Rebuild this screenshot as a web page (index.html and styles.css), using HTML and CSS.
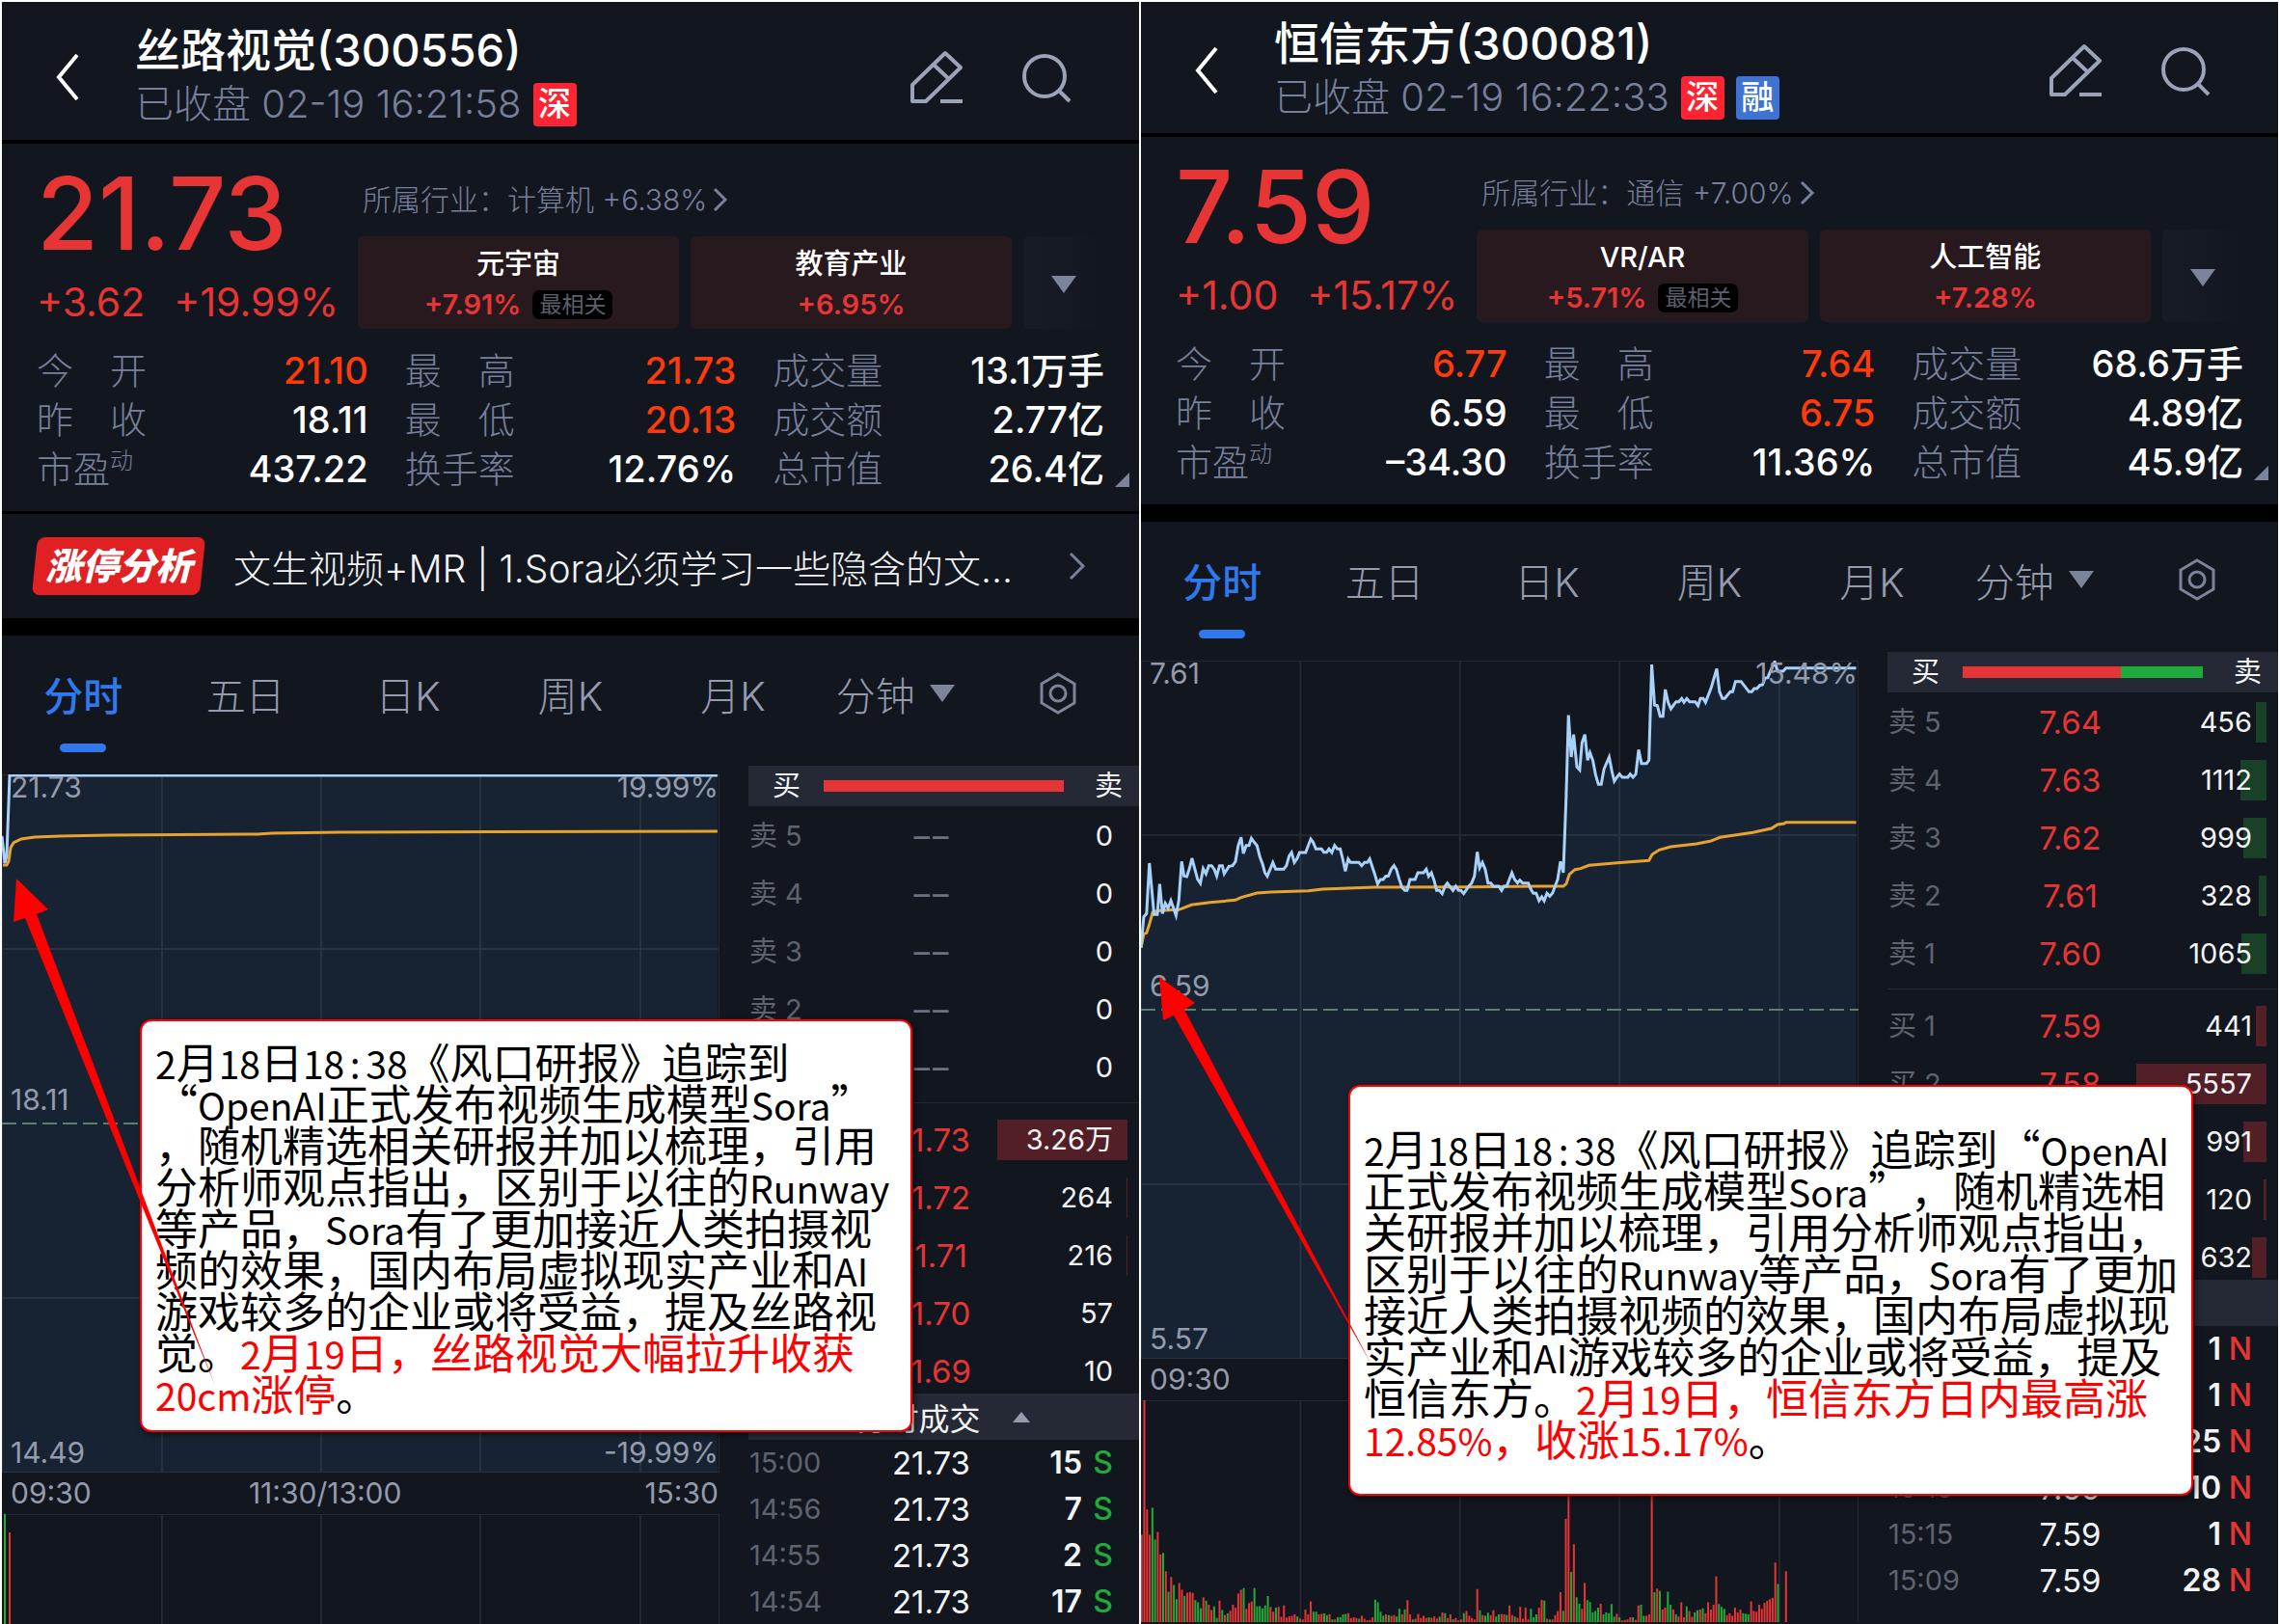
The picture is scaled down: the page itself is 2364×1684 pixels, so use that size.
FILE: index.html
```html
<!DOCTYPE html>
<html lang="zh-CN">
<head>
    <meta charset="UTF-8">
    <meta name="viewport" content="width=device-width, initial-scale=1.0">
    <title>丝路视觉 / 恒信东方</title>
    <link rel="stylesheet" href="styles.css">
</head>
<body>
    <main class="board">
        <section class="panel">
            <header class="header">
                <button class="icon-button" aria-label="返回">
                    <svg width="26" height="52" viewBox="0 0 26 52"><path class="back" d="M23 3 L4 26 L23 49"/></svg>
                </button>
                <div class="title">
                    <h1>丝路视觉(300556)</h1>
                    <p>已收盘 02-19 16:21:58 <span class="tag tag-red">深</span></p>
                </div>
                <button class="icon-button" aria-label="编辑">
                    <svg class="icon" width="56" height="56" viewBox="0 0 56 56"><path d="M38 3 L54 18 L18 53 H4 V36 Z M26 15 L42 30 M33 53 H56"/></svg>
                </button>
                <button class="icon-button" aria-label="搜索">
                    <svg class="icon" width="54" height="56" viewBox="0 0 54 56"><circle cx="24" cy="27" r="21"/><path d="M39 42 L50 53"/></svg>
                </button>
            </header>

            <div class="quote">
                <div class="summary">
                    <div class="price">
                        <strong>21.73</strong>
                        <p><span>+3.62</span><span>+19.99%</span></p>
                    </div>
                    <div class="concepts">
                        <a class="industry" href="#">所属行业：计算机 +6.38%<svg width="16" height="26" viewBox="0 0 16 26"><path d="M2 2 L13 13 L2 24"/></svg></a>
                        <div class="concept-list">
                            <a class="concept" href="#"><b>元宇宙</b><span>+7.91% <i>最相关</i></span></a>
                            <a class="concept" href="#"><b>教育产业</b><span>+6.95%</span></a>
                            <button class="more" aria-label="更多"><span class="down"></span></button>
                        </div>
                    </div>
                </div>
                <dl class="stats">
                    <div><dt>今<span></span>开</dt><dd class="up">21.10</dd></div>
                    <div><dt>最<span></span>高</dt><dd class="up">21.73</dd></div>
                    <div><dt>成交量</dt><dd>13.1万手</dd></div>
                    <div><dt>昨<span></span>收</dt><dd>18.11</dd></div>
                    <div><dt>最<span></span>低</dt><dd class="up">20.13</dd></div>
                    <div><dt>成交额</dt><dd>2.77亿</dd></div>
                    <div><dt>市盈<sup>动</sup></dt><dd>437.22</dd></div>
                    <div><dt>换手率</dt><dd>12.76%</dd></div>
                    <div><dt>总市值</dt><dd>26.4亿</dd></div>
                </dl>
            </div>

            <a class="analysis" href="#">
                <span class="analysis-tag">涨停分析</span>
                <span class="analysis-text">文生视频+MR | 1.Sora必须学习一些隐含的文…</span>
                <svg width="20" height="32" viewBox="0 0 20 32"><path d="M3 3 L16 16 L3 29"/></svg>
            </a>

            <nav class="tabs">
                <button class="active">分时</button>
                <button>五日</button>
                <button>日K</button>
                <button>周K</button>
                <button>月K</button>
                <button>分钟<span class="down"></span></button>
                <button aria-label="设置"><svg width="40" height="44" viewBox="0 0 40 44"><path d="M20 2 L37 12 V32 L20 42 L3 32 V12 Z"/><circle cx="20" cy="22" r="8"/></svg></button>
            </nav>

            <div class="market">
                <div class="chart">
                    <div class="plot">
                        <svg viewBox="0 0 744 724" preserveAspectRatio="none">
                            <path class="area" d="M0 64 L3 92 L5 84 L8 1 H742 V724 H0 Z"/>
                            <path class="grid" d="M0 0 H744 V724 H0 Z M166 0 V724 M331 0 V724 M496 0 V724 M662 0 V724 M0 181 H744 M0 543 H744"/>
                            <path class="base" d="M0 362 H744"/>
                            <path class="avg" d="M1 94 L5 94 L7 90 L9 76 L12 71 L20 67 L34 65 L60 64 L111 63 L265 62 L280 61 L350 60 L742 59"/>
                            <path class="line" d="M0 64 L3 92 L5 84 L8 1 H742"/>
                        </svg>
                        <span class="mark top-left">21.73</span>
                        <span class="mark top-right">19.99%</span>
                        <span class="mark mid-left">18.11</span>
                        <span class="mark bottom-left">14.49</span>
                        <span class="mark bottom-right">-19.99%</span>
                    </div>
                    <div class="times"><span>09:30</span><span>11:30/13:00</span><span>15:30</span></div>
                    <svg class="volume" viewBox="0 0 744 230" preserveAspectRatio="none">
                        <path class="grid" d="M0 0 H744 V230 M166 0 V230 M331 0 V230 M496 0 V230 M662 0 V230"/>
                        <path class="vol-down" d="M3 230 V0"/>
                        <path class="vol-up" d="M8 230 V19"/>
                    </svg>
                </div>

                <div class="book">
                    <div class="ratio"><span>买</span><div class="ratio-bar"></div><span>卖</span></div>
                    <table class="orders">
                        <tbody>
                            <tr><th>卖 5</th><td class="none">–&hairsp;–</td><td>0</td></tr>
                            <tr><th>卖 4</th><td class="none">–&hairsp;–</td><td>0</td></tr>
                            <tr><th>卖 3</th><td class="none">–&hairsp;–</td><td>0</td></tr>
                            <tr><th>卖 2</th><td class="none">–&hairsp;–</td><td>0</td></tr>
                            <tr><th>卖 1</th><td class="none">–&hairsp;–</td><td>0</td></tr>
                        </tbody>
                        <tbody class="buy">
                            <tr><th>买 1</th><td>21.73</td><td>3.26万<i style="width: 135px"></i></td></tr>
                            <tr><th>买 2</th><td>21.72</td><td>264<i style="width: 1px"></i></td></tr>
                            <tr><th>买 3</th><td>21.71</td><td>216<i style="width: 1px"></i></td></tr>
                            <tr><th>买 4</th><td>21.70</td><td>57</td></tr>
                            <tr><th>买 5</th><td>21.69</td><td>10</td></tr>
                        </tbody>
                    </table>
                    <button class="trades-head">分时成交<span class="upward"></span></button>
                    <table class="trades">
                        <tbody>
                            <tr><th>15:00</th><td>21.73</td><td>15<b class="sell-side">S</b></td></tr>
                            <tr><th>14:56</th><td>21.73</td><td>7<b class="sell-side">S</b></td></tr>
                            <tr><th>14:55</th><td>21.73</td><td>2<b class="sell-side">S</b></td></tr>
                            <tr><th>14:54</th><td>21.73</td><td>17<b class="sell-side">S</b></td></tr>
                        </tbody>
                    </table>
                </div>
            </div>

            <div class="note note-left">
                <p><span class="en">2</span>月<span class="en">18</span>日<span class="en">18<s>:</s>38</span>《风口研报》追踪到<br>“<span class="en">OpenAI</span>正式发布视频生成模型<span class="en">Sora</span>”<br>，随机精选相关研报并加以梳理，引用<br>分析师观点指出，区别于以往的<span class="en">Runway</span><br>等产品，<span class="en">Sora</span>有了更加接近人类拍摄视<br>频的效果，国内布局虚拟现实产业和<span class="en">AI</span><br>游戏较多的企业或将受益，提及丝路视<br>觉。<em><span class="en">2</span>月<span class="en">19</span>日，丝路视觉大幅拉升收获<br><span class="en">20cm</span>涨停</em>。</p>
            </div>
            <svg class="arrow arrow-left" width="220" height="540" viewBox="0 0 220 540"><path d="M5 8 L38 40 L26 45 L211 534 L14 49 L2 53 Z"/></svg>
        </section>

        <section class="panel compact">
            <header class="header">
                <button class="icon-button" aria-label="返回">
                    <svg width="26" height="52" viewBox="0 0 26 52"><path class="back" d="M23 3 L4 26 L23 49"/></svg>
                </button>
                <div class="title">
                    <h1>恒信东方(300081)</h1>
                    <p>已收盘 02-19 16:22:33 <span class="tag tag-red">深</span><span class="tag tag-blue">融</span></p>
                </div>
                <button class="icon-button" aria-label="编辑">
                    <svg class="icon" width="56" height="56" viewBox="0 0 56 56"><path d="M38 3 L54 18 L18 53 H4 V36 Z M26 15 L42 30 M33 53 H56"/></svg>
                </button>
                <button class="icon-button" aria-label="搜索">
                    <svg class="icon" width="54" height="56" viewBox="0 0 54 56"><circle cx="24" cy="27" r="21"/><path d="M39 42 L50 53"/></svg>
                </button>
            </header>

            <div class="quote">
                <div class="summary">
                    <div class="price">
                        <strong>7.59</strong>
                        <p><span>+1.00</span><span>+15.17%</span></p>
                    </div>
                    <div class="concepts">
                        <a class="industry" href="#">所属行业：通信 +7.00%<svg width="16" height="26" viewBox="0 0 16 26"><path d="M2 2 L13 13 L2 24"/></svg></a>
                        <div class="concept-list">
                            <a class="concept" href="#"><b>VR/AR</b><span>+5.71% <i>最相关</i></span></a>
                            <a class="concept" href="#"><b>人工智能</b><span>+7.28%</span></a>
                            <button class="more" aria-label="更多"><span class="down"></span></button>
                        </div>
                    </div>
                </div>
                <dl class="stats">
                    <div><dt>今<span></span>开</dt><dd class="up">6.77</dd></div>
                    <div><dt>最<span></span>高</dt><dd class="up">7.64</dd></div>
                    <div><dt>成交量</dt><dd>68.6万手</dd></div>
                    <div><dt>昨<span></span>收</dt><dd>6.59</dd></div>
                    <div><dt>最<span></span>低</dt><dd class="up">6.75</dd></div>
                    <div><dt>成交额</dt><dd>4.89亿</dd></div>
                    <div><dt>市盈<sup>动</sup></dt><dd>–34.30</dd></div>
                    <div><dt>换手率</dt><dd>11.36%</dd></div>
                    <div><dt>总市值</dt><dd>45.9亿</dd></div>
                </dl>
            </div>

            <nav class="tabs">
                <button class="active">分时</button>
                <button>五日</button>
                <button>日K</button>
                <button>周K</button>
                <button>月K</button>
                <button>分钟<span class="down"></span></button>
                <button aria-label="设置"><svg width="40" height="44" viewBox="0 0 40 44"><path d="M20 2 L37 12 V32 L20 42 L3 32 V12 Z"/><circle cx="20" cy="22" r="8"/></svg></button>
            </nav>

            <div class="market">
                <div class="chart">
                    <div class="plot">
                        <svg id="priceChart" viewBox="2 75 1534 2172" preserveAspectRatio="none">
                            <path class="area" id="priceArea"/>
                            <path class="grid" d="M2 75 H1536 V2247 H2 Z M343 75 V2247 M684 75 V2247 M1025 75 V2247 M1367 75 V2247 M2 618 H1536 M2 1704 H1536"/>
                            <path class="base" d="M2 1161 H1536"/>
                            <polyline class="avg" points="2,968 8,925 14,922 20,895 27,858 40,853 83,850 110,835 150,827 204,820 216,812 250,798 280,795 360,791 390,786 500,780 700,779 850,777 905,777 911,770 918,740 930,725 942,722 960,712 1020,704 1088,697 1095,678 1110,664 1135,654 1190,645 1221,636 1240,625 1310,610 1350,597 1363,585 1377,582 1381,578 1531,578"/>
                            <polyline class="line" id="priceLine"/>
                        </svg>
                        <span class="mark top-left">7.61</span>
                        <span class="mark top-right">15.48%</span>
                        <span class="mark mid-left">6.59</span>
                        <span class="mark bottom-left">5.57</span>
                        <span class="mark bottom-right">-15.48%</span>
                    </div>
                    <div class="times"><span>09:30</span><span>11:30/13:00</span><span>15:30</span></div>
                    <svg class="volume" viewBox="2 0 1534 640" preserveAspectRatio="none">
                        <path class="grid" d="M2 0 H1536 V640 M343 0 V640 M684 0 V640 M1025 0 V640 M1367 0 V640"/>
                        <path class="vol-up" id="volUp"/>
                        <path class="vol-down" id="volDown"/>
                    </svg>
                </div>

                <div class="book">
                    <div class="ratio"><span>买</span><div class="ratio-bar split"></div><span>卖</span></div>
                    <table class="orders">
                        <tbody>
                            <tr><th>卖 5</th><td>7.64</td><td>456<i style="width: 11px"></i></td></tr>
                            <tr><th>卖 4</th><td>7.63</td><td>1112<i style="width: 27px"></i></td></tr>
                            <tr><th>卖 3</th><td>7.62</td><td>999<i style="width: 24px"></i></td></tr>
                            <tr><th>卖 2</th><td>7.61</td><td>328<i style="width: 8px"></i></td></tr>
                            <tr><th>卖 1</th><td>7.60</td><td>1065<i style="width: 26px"></i></td></tr>
                        </tbody>
                        <tbody class="buy">
                            <tr><th>买 1</th><td>7.59</td><td>441<i style="width: 11px"></i></td></tr>
                            <tr><th>买 2</th><td>7.58</td><td>5557<i style="width: 135px"></i></td></tr>
                            <tr><th>买 3</th><td>7.57</td><td>991<i style="width: 24px"></i></td></tr>
                            <tr><th>买 4</th><td>7.56</td><td>120<i style="width: 3px"></i></td></tr>
                            <tr><th>买 5</th><td>7.55</td><td>632<i style="width: 15px"></i></td></tr>
                        </tbody>
                    </table>
                    <button class="trades-head">分时成交<span class="upward"></span></button>
                    <table class="trades">
                        <tbody>
                            <tr><th>15:29</th><td>7.59</td><td>1<b>N</b></td></tr>
                            <tr><th>15:27</th><td>7.59</td><td>1<b>N</b></td></tr>
                            <tr><th>15:20</th><td>7.59</td><td>25<b>N</b></td></tr>
                            <tr><th>15:18</th><td>7.59</td><td>10<b>N</b></td></tr>
                            <tr><th>15:15</th><td>7.59</td><td>1<b>N</b></td></tr>
                            <tr><th>15:09</th><td>7.59</td><td>28<b>N</b></td></tr>
                        </tbody>
                    </table>
                </div>
            </div>

            <div class="note note-right">
                <p><span class="en">2</span>月<span class="en">18</span>日<span class="en">18<s>:</s>38</span>《风口研报》追踪到“<span class="en">OpenAI</span><br>正式发布视频生成模型<span class="en">Sora</span>”，随机精选相<br>关研报并加以梳理，引用分析师观点指出，<br>区别于以往的<span class="en">Runway</span>等产品，<span class="en">Sora</span>有了更加<br>接近人类拍摄视频的效果，国内布局虚拟现<br>实产业和<span class="en">AI</span>游戏较多的企业或将受益，提及<br>恒信东方。<em><span class="en">2</span>月<span class="en">19</span>日，恒信东方日内最高涨<br><span class="en">12.85%</span>，收涨<span class="en">15.17%</span></em>。</p>
            </div>
            <svg class="arrow arrow-right" width="240" height="420" viewBox="0 0 240 420"><path d="M9 13 L46 40 L35 47 L229 415 L24 53 L13 58 Z"/></svg>
        </section>
    </main>

    <script src="app.js"></script>
</body>
</html>
```
FILE: styles.css
```css
* {
    box-sizing: border-box;
}
body {
    margin: 0;
    background-color: #fff;
    color: #f2f3f5;
    font-family: Inter, "Noto Sans CJK SC", sans-serif;
    font-size: 29px;
    overflow: hidden;
}
h1, p, dl, dd {
    margin: 0;
}
a {
    color: inherit;
    text-decoration: none;
}
button {
    padding: 0;
    border: none;
    background: none;
    color: inherit;
    font: inherit;
    cursor: pointer;
}
svg {
    display: block;
    fill: none;
}
.board {
    display: grid;
    grid-template-columns: 1fr 1fr;
    gap: 2px;
    height: 100vh;
    padding: 2px 2px 0;
}
.panel {
    position: relative;
    min-width: 0;
    overflow: hidden;
    background-color: #12161f;
}

/* header */
.header {
    display: flex;
    align-items: center;
    padding: 22px 68px 9px 55px;
    border-bottom: 4px solid #000;
}
.compact .header {
    padding-top: 15px;
}
.back {
    stroke: #fff;
    stroke-width: 4;
}
.title {
    flex: 1;
    margin-left: 57px;
    line-height: 56px;
}
.title h1 {
    font-size: 47px;
    font-weight: 500;
    color: #fff;
}
.title p {
    display: flex;
    align-items: center;
    font-size: 40px;
    font-weight: 300;
    color: #76809b;
}
.tag {
    width: 45px;
    height: 45px;
    margin-left: 12px;
    border-radius: 4px;
    color: #fff;
    font-size: 34px;
    font-weight: 500;
    line-height: 44px;
    text-align: center;
}
.tag-red {
    background-color: #ff2433;
}
.tag-blue {
    background-color: #3e73d3;
}
.icon {
    margin-left: 61px;
    stroke: #9ba3b8;
    stroke-width: 4;
    stroke-linejoin: round;
}

/* quote */
.quote {
    padding: 22px 36px 18px;
    border-bottom: 3px solid #000;
}
.compact .quote {
    border-bottom-width: 18px;
}
.summary {
    display: flex;
    gap: 20px;
    margin-bottom: 17px;
}
.price {
    color: #e63534;
}
.price strong {
    display: block;
    margin-bottom: 18px;
    font-size: 104px;
    font-weight: 500;
    line-height: 100px;
}
.price p {
    display: flex;
    gap: 30px;
    font-size: 41px;
    line-height: 48px;
}
.concepts {
    flex: 1;
    padding-top: 18px;
}
.industry {
    display: flex;
    align-items: center;
    gap: 6px;
    margin: 0 0 20px 5px;
    color: #76809b;
    font-size: 30px;
    font-weight: 300;
    line-height: 36px;
}
.industry svg,
.analysis svg {
    stroke: #76809b;
    stroke-width: 3;
}
.concept-list {
    display: flex;
    gap: 12px;
}
.concept {
    display: flex;
    flex: 1;
    flex-direction: column;
    align-items: center;
    height: 96px;
    padding-top: 8px;
    border-radius: 6px;
    background-color: #28191f;
    line-height: 42px;
}
.concept b {
    color: #fff;
    font-size: 29px;
    font-weight: 500;
}
.concept span {
    display: flex;
    align-items: center;
    gap: 12px;
    color: #e63534;
    font-weight: 600;
}
.concept i {
    padding: 0 7px;
    border-radius: 7px;
    background-color: #000;
    color: #5a606c;
    font-size: 23px;
    font-style: normal;
    font-weight: 400;
    line-height: 30px;
}
.more {
    width: 84px;
    border-radius: 6px;
    background: linear-gradient(90deg, #181c27, #12161f);
}
.down {
    display: inline-block;
    border: 13px solid transparent;
    border-top: 18px solid #7c8499;
    border-bottom: 0;
}
.stats {
    position: relative;
    display: grid;
    grid-template-columns: repeat(3, 1fr);
    column-gap: 38px;
    padding-top: 1px;
    font-size: 38px;
    line-height: 51px;
}
.stats::after {
    content: "";
    position: absolute;
    right: -26px;
    bottom: 7px;
    border-bottom: 15px solid #7c8499;
    border-left: 15px solid transparent;
}
.stats div {
    display: flex;
    justify-content: space-between;
    height: 51px;
}
.stats dt {
    display: flex;
    color: #76809b;
    font-weight: 300;
}
.stats dt span {
    width: 38px;
}
.stats sup {
    font-size: 24px;
    line-height: 34px;
}
.stats dd {
    color: #fff;
    font-size: 38px;
    font-weight: 500;
}
.stats .up {
    color: #ff3a0c;
}

/* limit-up analysis */
.analysis {
    display: flex;
    align-items: center;
    height: 126px;
    padding: 0 54px 0 31px;
    border-bottom: 18px solid #000;
}
.analysis-tag {
    position: relative;
    z-index: 0;
    width: 180px;
    color: #fff;
    font-size: 38px;
    font-style: italic;
    font-weight: 900;
    line-height: 58px;
    text-align: center;
}
.analysis-tag::before {
    content: "";
    position: absolute;
    z-index: -1;
    inset: -1px 3px;
    border-radius: 8px;
    background-color: #e02022;
    transform: skewX(-6deg);
}
.analysis-text {
    flex: 1;
    margin-left: 29px;
    font-size: 39px;
    font-weight: 300;
    white-space: nowrap;
}

/* tabs */
.tabs {
    display: grid;
    grid-template-columns: repeat(7, 1fr);
    height: 135px;
    padding-top: 30px;
    color: #949bad;
    font-size: 41px;
    font-weight: 300;
}
.tabs button {
    position: relative;
    display: flex;
    align-items: center;
    justify-content: center;
    gap: 15px;
    height: 60px;
}
.tabs .active {
    color: #2f78ee;
    font-weight: 500;
}
.tabs .active::after {
    content: "";
    position: absolute;
    bottom: -31px;
    width: 48px;
    height: 9px;
    border-radius: 5px;
    background-color: #2f78ee;
}
.tabs svg {
    stroke: #7c8499;
    stroke-width: 3;
}

/* chart */
.market {
    display: grid;
    grid-template-columns: 63.1% 1fr;
    column-gap: 30px;
}
.chart {
    padding-top: 9px;
}
.plot {
    position: relative;
    height: 724px;
}
.plot svg {
    width: 100%;
    height: 100%;
}
.plot path,
.plot polyline,
.volume path {
    vector-effect: non-scaling-stroke;
}
.area {
    fill: #172332;
}
.grid {
    stroke: rgba(255, 255, 255, 0.08);
    stroke-width: 2;
}
.base {
    stroke: #5f7f6c;
    stroke-width: 2;
    stroke-dasharray: 15 6;
}
.avg {
    stroke: #e8a22e;
    stroke-width: 3;
}
.line {
    stroke: #a9d2fb;
    stroke-width: 3;
}
.mark,
.times {
    color: #949bad;
    font-size: 30px;
}
.mark {
    position: absolute;
    line-height: 26px;
}
.top-left {
    top: 0;
    left: 9px;
}
.top-right {
    top: 0;
    right: 1px;
}
.mid-left {
    top: 324px;
    left: 9px;
}
.bottom-left {
    bottom: 8px;
    left: 9px;
}
.bottom-right {
    right: 1px;
    bottom: 8px;
}
.times {
    display: grid;
    grid-template-columns: 2fr 4fr 3fr;
    padding: 0 1px 0 9px;
    line-height: 43px;
    text-align: center;
}
.times span:first-child {
    text-align: left;
}
.times span:last-child {
    text-align: right;
}
.volume {
    width: 100%;
    height: 230px;
}
.vol-up {
    stroke: #e63534;
    stroke-width: 2;
}
.vol-down {
    stroke: #1fab3c;
    stroke-width: 2;
}

/* order book */
.ratio {
    display: flex;
    align-items: center;
    height: 42px;
    padding: 0 17px 0 25px;
    background-color: #252936;
    line-height: 40px;
}
.ratio-bar {
    flex: 1;
    height: 12px;
    margin: 0 32px 0 24px;
    background-color: #e63534;
}
.ratio-bar.split {
    background: linear-gradient(90deg, #e63534 66%, #1fab3c 66%);
}
table,
tbody {
    display: block;
}
tr {
    position: relative;
    display: grid;
    grid-template-columns: 1fr auto 1fr;
    align-items: center;
    padding: 0 27px 0 1px;
    line-height: 40px;
}
th,
td {
    padding: 0;
    font-weight: 400;
    text-align: left;
}
th {
    color: #5d636f;
}
td:nth-child(2) {
    font-size: 33px;
}
td:last-child {
    text-align: right;
}
.orders tbody {
    display: grid;
    gap: 18px;
    padding: 10px 0 15px;
}
.orders .buy {
    padding: 17px 0 2px;
    border-top: 1px solid #252936;
}
.orders tr {
    z-index: 0;
    height: 42px;
}
.orders td:nth-child(2) {
    color: #e63534;
}
.orders td.none {
    color: #6a7080;
}
.orders i {
    position: absolute;
    z-index: -1;
    top: 0;
    right: 12px;
    height: 42px;
    background-color: #184127;
}
.orders .buy i {
    background-color: #531f27;
}
.trades-head {
    display: flex;
    align-items: center;
    justify-content: center;
    gap: 34px;
    width: 100%;
    height: 48px;
    background-color: #252936;
    font-size: 32px;
}
.upward {
    border: 9px solid transparent;
    border-top: 0;
    border-bottom: 11px solid #949bad;
}
.trades tr {
    height: 48px;
}
.trades td:last-child {
    font-size: 32px;
    font-weight: 600;
}
.trades b {
    display: inline-block;
    width: 32px;
    color: #e63534;
    font-weight: 500;
}
.trades .sell-side {
    color: #1fab3c;
}

/* notes lying over the panels */
.note {
    position: absolute;
    border: 2px solid #f00;
    border-radius: 12px;
    background-color: #fff;
    box-shadow: 2px 3px 6px rgba(0, 0, 0, 0.5);
    color: #000;
    font-family: "Noto Sans CJK SC", sans-serif;
    font-size: 44px;
    line-height: 43px;
    text-spacing-trim: space-all;
    white-space: nowrap;
}
.note-left {
    top: 1055px;
    left: 143px;
    width: 801px;
    padding: 20px 14px 17px;
}
.note-right {
    top: 1123px;
    left: 215px;
    width: 876px;
    padding: 42px 14px 36px;
}
.note em {
    color: #f00;
    font-style: normal;
}
.en {
    font-size: 39px;
    line-height: 1px;
}
.en s {
    display: inline-block;
    width: 22px;
    text-align: center;
    text-decoration: none;
}
.arrow {
    position: absolute;
    fill: #f00;
}
.arrow-left {
    top: 901px;
    left: 10px;
}
.arrow-right {
    top: 998px;
    left: 10px;
}
```
FILE: app.js
```js
// minute prices, as x,y pairs in the units of the chart's viewBox
const prices = '2,968 8,872 14,862 20,705 30,865 37,865 42,770 48,862 54,830 60,845 66,822 77,868 83,820 89,700 94,745 100,747 106,720 111,690 123,755 129,768 135,722 141,738 147,713 153,713 159,725 164,745 170,713 176,713 180,738 190,715 198,713 204,700 210,650 216,625 221,675 227,650 233,650 238,628 244,640 250,650 256,685 262,708 267,735 272,746 284,703 290,724 307,724 313,713 319,682 324,672 330,703 336,690 341,672 354,672 365,630 370,640 376,661 388,661 393,671 399,671 404,661 410,672 416,650 422,661 428,661 433,690 439,730 445,692 450,703 468,703 474,713 480,703 486,703 491,692 502,740 508,770 514,756 520,756 525,746 531,745 537,724 543,713 548,724 554,755 560,780 566,790 571,790 577,756 588,756 594,735 606,735 612,724 617,746 623,735 629,760 634,790 640,790 646,800 652,777 657,767 669,790 675,777 681,790 686,790 692,800 703,777 709,767 715,745 721,670 726,720 732,703 738,724 744,767 750,767 755,777 767,777 773,790 778,777 784,777 795,735 801,756 807,767 812,758 818,767 830,767 836,788 841,799 847,799 853,822 859,810 864,822 870,799 876,808 882,798 893,755 899,700 905,735 911,500 916,245 922,375 927,305 934,405 940,415 945,330 951,305 957,385 962,362 968,385 974,430 980,460 986,460 992,412 1003,375 1009,420 1014,450 1020,437 1025,428 1031,438 1043,438 1048,428 1054,438 1060,428 1066,352 1072,395 1083,395 1088,385 1094,87 1100,213 1106,215 1112,248 1118,248 1123,165 1129,205 1135,225 1146,203 1152,203 1158,193 1163,205 1169,193 1175,203 1187,203 1193,215 1198,193 1204,193 1209,205 1221,160 1233,100 1239,172 1245,193 1250,193 1262,172 1267,172 1273,140 1285,140 1302,172 1308,172 1313,162 1319,162 1325,152 1331,150 1336,130 1342,128 1350,100 1357,78 1363,108 1375,108 1381,98 1531,98';

document.getElementById('priceLine').setAttribute('points', prices);
document.getElementById('priceArea').setAttribute('d', `M${prices} V2247 H2 Z`);

// minute volumes, negative when the price fell
const volumes = [
    252, 640, 325, 252, -330, -238, 260, 195, -200, 147, -88, 130, -107, -66, 113, 93, -75, 85, 87, 84,
    -63, -57, -40, 72, -62, 50, 35, -45, -12, 62, -35, 20, -25, 33, 50, 42, 82, 93, -98, 38,
    55, 59, -98, -45, -46, -39, -48, -75, 44, 30, -42, 44, 15, 48, 13, 17, 18, 22, -16, 10,
    8, 36, 22, 60, -30, -30, 22, 24, -25, -20, 22, -8, 8, -14, -14, -22, -24, 26, 12, 14,
    12, -10, 18, 10, 5, 6, 14, -65, -57, -30, -18, 22, -20, 18, 20, -16, -38, 22, -36, 63,
    22, -8, 10, 24, 12, 18, 12, -14, 12, 16, 10, -16, 28, -26, 12, 22, -8, 12, 5, 8,
    -26, 32, 18, 12, 8, 95, -34, 20, -18, -27, 20, 34, -16, -22, 24, 22, -20, 48, 20, -16,
    12, 44, 10, 42, 8, -38, -14, -22, 42, 64, -62, 10, -8, 8, 20, 32, 86, -33, 298, 500,
    -145, 225, -72, -53, 38, 113, -63, -58, -28, -32, -42, 53, -22, -28, -26, -52, -15, 24, -14, 5,
    6, 8, 14, -14, 6, 48, -50, -18, 18, 22, 500, -86, 97, -90, 36, 42, -88, -50, 36, -22,
    16, 57, 14, -45, 32, 15, -28, -34, 36, -40, 26, 57, 36, 50, 132, -52, -44, -38, 20, 26,
    18, 42, 28, 36, -26, -24, -22, 60, 32, 30, 50, 38, 56, 62, 66, 70, 172, -110, 0, 0,
    147
];

function volumePath(keep) {
    return volumes
        .map((value, i) => keep(value) ? `M${(3.5 + i * 5.74).toFixed(1)} 640 v-${Math.abs(value)}` : '')
        .join('');
}

document.getElementById('volUp').setAttribute('d', volumePath(value => value > 0));
document.getElementById('volDown').setAttribute('d', volumePath(value => value < 0));
```
